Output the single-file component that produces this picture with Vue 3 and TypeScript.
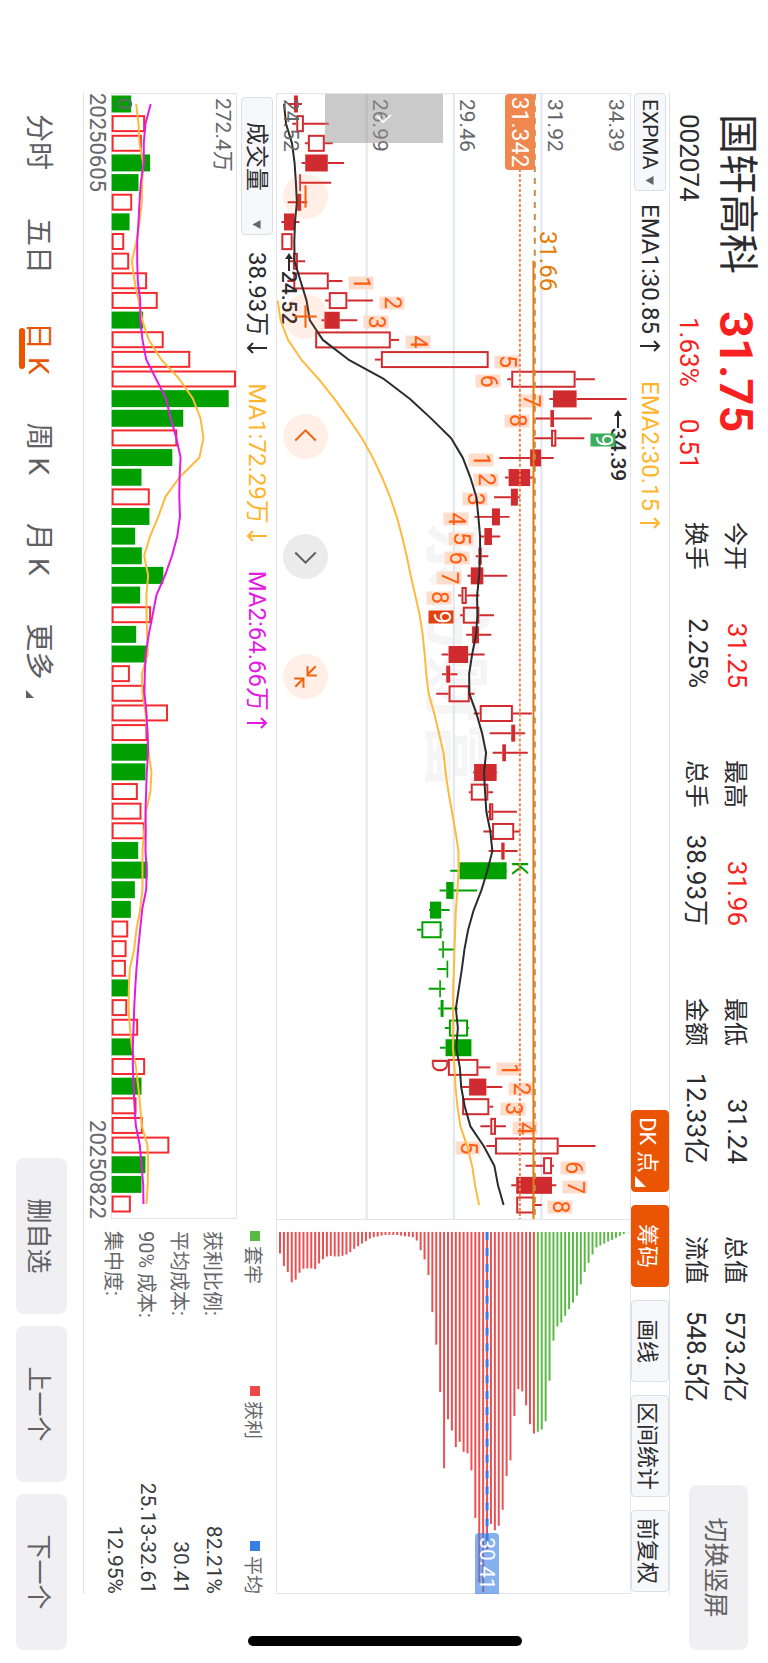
<script setup lang="ts">
import { computed, ref } from 'vue'

type Candle = [low: number, bodyLow: number, bodyHigh: number, high: number, style: string]

// Horizontal geometry shared by the price and the volume charts.
const W = 1126
const H = 354
const VOL_H = 125
const FIRST = 10
const STEP = 1102 / 56
const BODY = 17

const cx = (i: number) => FIRST + i * STEP
// Price levels run from 18 (bottom) to 1081 (top).
const py = (v: number) => ((1081 - v) / 1063) * H
// Volume levels run from 336 (zero) to 711 (maximum).
const vy = (v: number) => ((711 - v) / 375) * VOL_H

// r/g: colour; f: filled, h: hollow
const candles: Candle[] = [
  [50, 68, 80, 92, 'rf'], [63, 75, 98, 173, 'rh'], [101, 110, 161, 185, 'rh'], [91, 102, 170, 219, 'rf'],
  [85, 84, 89, 180, 'rf'], [49, 78, 90, 108, 'rh'], [30, 38, 70, 84, 'rf'], [29, 30, 64, 65, 'rh'],
  [52, 65, 80, 102, 'rh'], [48, 66, 173, 214, 'rh'], [162, 173, 229, 306, 'rh'], [151, 160, 206, 259, 'rf'],
  [132, 132, 360, 385, 'rh'], [312, 330, 655, 655, 'rh'], [711, 723, 917, 975, 'rh'], [838, 849, 920, 1071, 'rf'],
  [797, 841, 852, 966, 'rf'], [793, 843, 859, 943, 'rh'], [687, 780, 813, 851, 'rf'], [704, 715, 780, 788, 'rf'],
  [671, 722, 743, 749, 'rf'], [612, 665, 689, 718, 'rf'], [630, 642, 665, 690, 'rf'], [616, 624, 634, 654, 'rf'],
  [591, 601, 639, 711, 'rf'], [563, 573, 589, 627, 'rh'], [569, 577, 627, 671, 'rh'], [587, 605, 626, 663, 'rf'],
  [513, 534, 593, 643, 'rf'], [514, 527, 539, 561, 'rf'], [497, 534, 598, 612, 'rh'], [610, 628, 728, 785, 'rh'],
  [658, 723, 735, 765, 'rh'], [667, 696, 707, 773, 'rf'], [608, 611, 679, 681, 'rf'], [595, 601, 654, 668, 'rh'],
  [652, 656, 669, 740, 'rh'], [639, 665, 732, 750, 'rh'], [655, 693, 703, 742, 'rf'], [539, 567, 709, 711, 'gf'],
  [507, 527, 549, 620, 'gf'], [475, 478, 512, 537, 'gf'], [439, 452, 513, 517, 'gh'], [504, 515, 520, 550, 'gf'],
  [500, 528, 533, 533, 'gf'], [474, 506, 511, 524, 'gf'], [503, 510, 519, 562, 'gf'], [523, 535, 593, 596, 'gh'],
  [508, 525, 603, 603, 'gf'], [532, 532, 624, 660, 'rh'], [575, 596, 648, 696, 'rf'], [575, 575, 657, 669, 'rh'],
  [630, 660, 677, 707, 'rh'], [648, 674, 866, 977, 'rh'], [766, 819, 846, 852, 'rh'], [723, 738, 846, 859, 'rf'],
  [738, 738, 793, 815, 'rh'],
]

const ema1 = [38, 44, 62, 70, 74, 77, 71, 69, 70, 88, 106, 116, 155, 232, 340, 418, 482, 542, 577, 600, 618, 624, 629, 629, 626, 620, 621, 617, 605, 596, 597, 618, 635, 647, 641, 644, 648, 660, 666, 651, 633, 610, 593, 582, 574, 565, 556, 562, 557, 568, 572, 583, 600, 640, 672, 683, 700]
const ema2 = [19, 28, 50, 90, 143, 190, 233, 273, 306, 334, 358, 378, 394, 408, 420, 434, 447, 456, 462, 467, 474, 491, 505, 519, 525, 534, 544, 555, 564, 564, 561, 556, 554, 552, 550, 548, 547, 548, 547, 552, 555, 561, 570, 590, 605, 614, 626]

const volumes = [395, 437, 427, 452, 417, 398, 390, 374, 389, 443, 475, 431, 493, 573, 711, 689, 552, 534, 519, 426, 451, 450, 407, 427, 492, 422, 455, 410, 442, 391, 434, 506, 444, 445, 438, 415, 426, 436, 416, 444, 406, 394, 386, 381, 379, 387, 383, 416, 399, 437, 426, 411, 430, 510, 438, 426, 394]
const volumeStyle = 'grrggrgrrrrgrrrggrggrggggg' + 'rggrrrrggrrrgggg' + 'rrrgrrgrgrrrggr'
const volMa1 = [410, 417, 420, 431, 428, 427, 420, 411, 397, 405, 417, 428, 448, 485, 540, 581, 604, 613, 601, 541, 498, 477, 452, 434, 446, 441, 441, 443, 445, 427, 429, 438, 445, 447, 456, 453, 440, 434, 429, 429, 429, 422, 411, 404, 391, 388, 387, 391, 397, 409, 416, 422, 427, 444, 446, 445, 441]
const volMa2 = [454, 438, 433, 433, 424, 420, 417, 413, 413, 415, 422, 422, 429, 440, 470, 500, 514, 531, 544, 541, 540, 542, 534, 518, 497, 471, 460, 448, 439, 436, 435, 441, 444, 446, 442, 440, 438, 439, 438, 442, 440, 428, 422, 416, 411, 407, 404, 402, 400, 400, 402, 405, 409, 421, 426, 431, 432]

const line = (values: number[], y: (v: number) => number, start = 0) =>
  values.map((v, i) => `${cx(i + start).toFixed(1)},${y(v).toFixed(1)}`).join(' ')

const ema1Line = computed(() => line(ema1, py))
const ema2Line = computed(() => line(ema2, py, 10))
const volMa1Line = computed(() => line(volMa1, vy))
const volMa2Line = computed(() => line(volMa2, vy))

// Chip distribution, lowest price first.
const chips = [65, 103, 121, 152, 144, 123, 111, 110, 110, 112, 95, 82, 74, 72, 74, 74, 72, 68, 61, 51, 43, 35, 28, 20, 16, 14, 11, 9, 9, 9, 9, 11, 13, 14, 16, 26, 55, 83, 130, 242, 340, 483, 713, 565, 599, 649, 633, 663, 668, 719, 863, 1057, 1087, 957, 881, 900, 886, 838, 736, 689, 555, 474, 481, 523, 580, 608, 603, 596, 571, 449, 328, 285, 273, 253, 233, 213, 192, 158, 121, 93, 68, 47, 41, 35, 29, 24, 18, 12, 6, 1]
const chipY = (i: number) => py(26 + i * (1048 / 89))

const counts: [index: number, level: number, text: string, kind?: string][] = [
  [9, 271, '1'], [10, 363, '2'], [11, 316, '3'], [12, 442, '4'], [13, 709, '5'], [14, 654, '6'], [15, 782, '7'],
  [16, 741, '8'], [17, 1000, '9', 'up'], [18, 631, '1'], [19, 648, '2'], [20, 615, '3'], [21, 555, '4'],
  [22, 573, '5'], [23, 560, '6'], [24, 534, '7'], [25, 506, '8'], [26, 512, '9', 'down'],
  [49, 716, '1'], [50, 752, '2'], [51, 727, '3'], [52, 763, '4'], [53, 593, '5'], [54, 909, '6'], [55, 915, '7'],
  [56, 871, '8'],
]
const signals: [index: number, level: number, text: string, kind: string][] = [
  [39, 747, 'K', 'k'], [49, 505, 'D', 'd'],
]
const place = (x: number, level: number) => ({ left: `${(x / W) * 100}%`, top: `${(py(level) / H) * 100}%` })

const priceTicks = [['34.39', 1039], ['31.92', 855], ['29.46', 590], ['26.99', 326], ['24.52', 60]] as const
const gridLevels = [814, 550, 287]

const quotes = [
  { label: '今开', value: '31.25', rise: true }, { label: '最高', value: '31.96', rise: true },
  { label: '最低', value: '31.24' }, { label: '总值', value: '573.2亿' },
  { label: '换手', value: '2.25%' }, { label: '总手', value: '38.93万' },
  { label: '金额', value: '12.33亿' }, { label: '流值', value: '548.5亿' },
]
const chipStats = [['获利比例:', '82.21%'], ['平均成本:', '30.41'], ['90% 成本:', '25.13-32.61'], ['集中度:', '12.95%']]
const tabs = ['分时', '五日', '日 K', '周 K', '月 K', '更多']
const activeTab = ref('日 K')

const UP = 'M6 21V2M1 7l5-5 5 5'
const DOWN = 'M6 1v19M1 15l5 5 5-5'
</script>

<template>
  <div class="viewport">
    <main class="stage">
      <header class="head">
        <div class="identity">
          <h1 class="name">国轩高科</h1>
          <strong class="price">31.75</strong>
          <span class="code">002074</span>
          <span class="change"><span>1.63%</span><span>0.51</span></span>
        </div>
        <dl class="quotes">
          <div v-for="q in quotes" :key="q.label" class="quote">
            <dt>{{ q.label }}</dt>
            <dd :class="{ rise: q.rise }">{{ q.value }}</dd>
          </div>
        </dl>
        <button class="soft switch" type="button">切换竖屏</button>
      </header>

      <section class="toolbar">
        <div class="picker picker-main">
          <select aria-label="主图指标"><option>EXPMA</option></select>
          <svg viewBox="0 0 10 9" aria-hidden="true"><path d="M0 0h10L5 9z" /></svg>
        </div>
        <span class="reading dark">EMA1:30.85<svg viewBox="0 0 12 22" aria-hidden="true"><path :d="UP" /></svg></span>
        <span class="reading amber">EMA2:30.15<svg viewBox="0 0 12 22" aria-hidden="true"><path :d="UP" /></svg></span>
        <div class="tools">
          <button class="tool on corner" type="button">DK 点<svg viewBox="0 0 12 12" aria-hidden="true"><path d="M12 0v12H0z" /></svg></button>
          <button class="tool on" type="button">筹码</button>
          <button class="tool" type="button">画线</button>
          <button class="tool" type="button">区间统计</button>
          <button class="tool" type="button">前复权</button>
        </div>
      </section>

      <section class="charts">
        <div class="kline">
          <span class="watermark">东方财富</span>
          <svg class="plot" :viewBox="`0 0 ${W} ${H}`" preserveAspectRatio="none" aria-hidden="true">
            <line v-for="g in gridLevels" :key="g" class="grid" x1="0" :x2="W" :y1="py(g)" :y2="py(g)" />
            <g v-for="(c, i) in candles" :key="i" :class="['candle', c[4]]">
              <path :d="`M${cx(i)} ${py(c[3])}V${py(c[2])}M${cx(i)} ${py(c[1])}V${py(c[0])}`" />
              <rect
                v-if="c[4][1] === 'h'" :x="cx(i) - BODY / 2 + 1" :width="BODY - 2"
                :y="py(c[2]) + 1" :height="Math.max(py(c[1]) - py(c[2]) - 2, 1)"
              />
              <rect v-else class="full" :x="cx(i) - BODY / 2" :width="BODY" :y="py(c[2])" :height="py(c[1]) - py(c[2])" />
            </g>
          </svg>
          <span class="note" :style="place(159, 53)">
            <svg viewBox="0 0 18 10" aria-hidden="true"><path d="M4 5h14" /><path class="tip" d="M0 5l6-4v8z" /></svg>24.52
          </span>
          <span class="note" :style="place(316, 1045)">
            <svg viewBox="0 0 18 10" aria-hidden="true"><path d="M4 5h14" /><path class="tip" d="M0 5l6-4v8z" /></svg>34.39
          </span>
          <span
            v-for="(t, i) in counts" :key="i" :class="['count', t[3]]" :style="place(cx(t[0]) + 2, t[1])"
          >{{ t[2] }}</span>
          <span
            v-for="t in signals" :key="t[2]" :class="['count', t[3]]" :style="place(cx(t[0]) - 3, t[1])"
          >{{ t[2] }}</span>
          <svg class="plot" :viewBox="`0 0 ${W} ${H}`" preserveAspectRatio="none" aria-hidden="true">
            <line class="alert" x1="75" :x2="W" :y1="py(749)" :y2="py(749)" />
            <line class="last" x1="167" :x2="W" :y1="py(790)" :y2="py(790)" />
            <line class="last-dash" x1="0" :x2="W" :y1="py(794)" :y2="py(794)" />
            <polyline class="amber-line" :points="ema2Line" />
            <polyline class="dark-line" :points="ema1Line" />
          </svg>
          <span v-for="t in priceTicks" :key="t[0]" class="tick" :style="place(5, t[1])">{{ t[0] }}</span>
          <span class="tag" :style="place(0, 750)">31.342</span>
          <span class="last-price" :style="place(137, 833)">31.66</span>
          <button class="handle" type="button" aria-label="展开">
            <svg viewBox="0 0 10 18"><path d="M1 1l8 9-7 7" /></svg>
          </button>
          <div class="controls">
            <button type="button" aria-label="缩小"><svg viewBox="-22 -22 44 44"><path d="M-11 0H11" /></svg></button>
            <button type="button" aria-label="放大"><svg viewBox="-22 -22 44 44"><path d="M-11 0H11M0 -11V11" /></svg></button>
            <button type="button" aria-label="左移"><svg viewBox="-22 -22 44 44"><path d="M4 -10L-6 0 4 10" /></svg></button>
            <button class="idle" type="button" aria-label="右移"><svg viewBox="-22 -22 44 44"><path d="M-4 -10L6 0 -4 10" /></svg></button>
            <button type="button" aria-label="退出全屏">
              <svg viewBox="-22 -22 44 44"><path d="M-10 -10L-2 -2M-10 -2H-1V-11M10 10L2 2M2 11V2H11" /></svg>
            </button>
          </div>
        </div>
        <div class="chips">
          <svg class="plot" viewBox="0 0 375 354" preserveAspectRatio="none" aria-hidden="true">
            <line
              v-for="(c, i) in chips" :key="i" :class="i > 65 ? 'trapped' : 'profit'"
              x1="12" :x2="12 + c / 3" :y1="chipY(i)" :y2="chipY(i)"
            />
            <line class="mean" x1="12" x2="330" :y1="chipY(53)" :y2="chipY(53)" />
          </svg>
          <span class="mean-tag" :style="{ top: `${(chipY(53) / H) * 100}%` }">30.41</span>
        </div>
      </section>

      <section class="lower">
        <div class="volume-side">
          <div class="volume-head">
            <div class="picker picker-volume">
              <select aria-label="副图指标"><option>成交量</option></select>
              <svg viewBox="0 0 10 9" aria-hidden="true"><path d="M0 0h10L5 9z" /></svg>
            </div>
            <span class="reading dark">38.93万<svg viewBox="0 0 12 22" aria-hidden="true"><path :d="DOWN" /></svg></span>
            <span class="reading amber">MA1:72.29万<svg viewBox="0 0 12 22" aria-hidden="true"><path :d="DOWN" /></svg></span>
            <span class="reading magenta">MA2:64.66万<svg viewBox="0 0 12 22" aria-hidden="true"><path :d="UP" /></svg></span>
          </div>
          <div class="volume">
            <svg class="plot" :viewBox="`0 0 ${W} ${VOL_H}`" preserveAspectRatio="none" aria-hidden="true">
              <template v-for="(v, i) in volumes" :key="i">
                <rect
                  v-if="volumeStyle[i] === 'r'" class="vol-up" :x="cx(i) - BODY / 2 + 1" :width="BODY - 2"
                  :y="vy(v) + 1" :height="VOL_H - vy(v) - 2"
                />
                <rect v-else class="vol-down" :x="cx(i) - BODY / 2" :width="BODY" :y="vy(v)" :height="VOL_H - vy(v)" />
              </template>
              <polyline class="amber-line" :points="volMa1Line" />
              <polyline class="magenta-line" :points="volMa2Line" />
            </svg>
            <span class="vol-max">272.4万</span>
            <span class="vol-zero">0</span>
          </div>
          <div class="dates"><time>20250605</time><time>20250822</time></div>
        </div>
        <aside class="chip-side">
          <div class="legend">
            <span><i class="key-trapped"></i>套牢</span>
            <span><i class="key-profit"></i>获利</span>
            <span><i class="key-mean"></i>平均</span>
          </div>
          <dl class="stats">
            <div v-for="s in chipStats" :key="s[0]"><dt>{{ s[0] }}</dt><dd>{{ s[1] }}</dd></div>
          </dl>
        </aside>
      </section>

      <footer class="foot">
        <nav class="tabs">
          <button
            v-for="t in tabs" :key="t" type="button" :class="{ active: t === activeTab }" @click="activeTab = t"
          >{{ t }}<svg v-if="t === '更多'" viewBox="0 0 8 8" aria-hidden="true"><path d="M8 0v8H0z" /></svg></button>
        </nav>
        <div class="pager">
          <button class="soft" type="button">删自选</button>
          <button class="soft" type="button">上一个</button>
          <button class="soft" type="button">下一个</button>
        </div>
      </footer>
      <div class="home-bar"></div>
    </main>
  </div>
</template>

<style>
body {
  margin: 0;
  background: #fff;
}
</style>

<style scoped>
.viewport {
  width: 100%;
  height: 100vh;
  overflow: hidden;
}
/* Landscape layout turned a quarter clockwise. */
.stage {
  position: relative;
  display: flex;
  flex-direction: column;
  width: 100vh;
  height: 100vw;
  transform-origin: 0 0;
  transform: rotate(90deg) translateY(-100%);
  background: #fff;
  color: #2b2b2e;
  font-family: Roboto, "Noto Sans CJK SC", sans-serif;
  font-size: 22px;
}
.stage * {
  box-sizing: border-box;
}
button, select {
  margin: 0;
  padding: 0;
  border: 0;
  background: none;
  color: inherit;
  font: inherit;
  white-space: nowrap;
}
h1, dl, dd {
  margin: 0;
}
svg {
  display: block;
  fill: none;
  overflow: visible;
}

/* header */
.head {
  display: flex;
  flex: none;
  height: 98px;
  padding: 0 13px 0 114px;
}
.identity {
  display: grid;
  grid-template: 62px 34px / 197px 1fr;
  align-items: center;
  flex: none;
  width: 408px;
  line-height: 1;
}
.name {
  font-size: 40px;
  font-weight: 400;
}
.price {
  color: #fa1f20;
  font-size: 47px;
  font-weight: 700;
}
.code, .change {
  font-size: 26px;
}
.change {
  display: flex;
  gap: 32px;
  padding-left: 6px;
  color: #fa1f20;
}
.quotes {
  display: grid;
  grid-template-columns: repeat(4, 166px);
  grid-auto-rows: 39px;
  column-gap: 72px;
  padding-top: 11px;
}
.quote {
  display: flex;
  align-items: center;
  justify-content: space-between;
}
.quote dt {
  font-size: 24px;
}
.quote dd {
  font-size: 26px;
}
.quote dd.rise {
  color: #fa1f20;
}
.soft {
  border-radius: 8px;
  background: #f0f0f2;
  color: #606064;
  font-size: 25px;
}
.switch {
  width: 165px;
  height: 59px;
  margin: 20px 0 0 auto;
}

/* toolbar */
.toolbar {
  display: flex;
  align-items: center;
  flex: none;
  height: 39px;
  margin: 0 69px 0 93px;
  padding-right: 2px;
  border-top: 1px solid #e3e3e6;
}
.picker {
  position: relative;
  height: 32px;
  border: 1px solid #dcdfe5;
  border-radius: 4px;
  background: #f6f8fb;
}
.picker select {
  width: 100%;
  height: 100%;
  appearance: none;
}
.picker svg {
  position: absolute;
  top: 11px;
  right: 5px;
  width: 9px;
  height: 9px;
  fill: #666;
  pointer-events: none;
}
.picker-main {
  width: 98px;
}
.picker-main select {
  padding-left: 5px;
  font-size: 21px;
}
.reading {
  display: flex;
  align-items: center;
  gap: 6px;
  margin-left: 13px;
  font-size: 24px;
  line-height: 30px;
}
.reading + .reading {
  margin-left: 29px;
}
.reading svg {
  width: 12px;
  height: 22px;
  stroke: currentColor;
  stroke-width: 2;
}
.dark { color: #2b2b2e; }
.amber { color: #ffb52e; }
.magenta { color: #e31ae3; }
.tools {
  display: flex;
  gap: 13px;
  margin-left: auto;
}
.tool {
  position: relative;
  min-width: 82px;
  height: 38px;
  padding: 0 6px;
  border: 1px solid #dcdfe5;
  border-radius: 4px;
  background: #f6f8fb;
  font-size: 22px;
}
.tool.on {
  border-color: #ea5504;
  background: #ea5504;
  color: #fff;
}
.corner {
  padding-right: 18px;
}
.corner svg {
  position: absolute;
  right: 4px;
  bottom: 3px;
  width: 11px;
  height: 11px;
  fill: #fff;
}

/* price chart */
.charts {
  display: grid;
  grid-template-columns: minmax(0, 1126fr) minmax(0, 375fr);
  flex: 354 1 0;
  min-height: 0;
  margin: 0 69px 0 93px;
}
.kline, .chips {
  position: relative;
  border: solid #e3e3e9;
  border-width: 1px 0 1px 1px;
}
.chips {
  border-right-width: 1px;
}
.plot {
  position: absolute;
  inset: 0;
  width: 100%;
  height: 100%;
  pointer-events: none;
}
.grid {
  stroke: #e1e5ee;
  stroke-width: 2;
}
.candle path {
  stroke-width: 2;
}
.candle rect {
  stroke-width: 2;
}
.rf, .rh { stroke: #d02b2e; }
.gf, .gh { stroke: #00a000; }
.candle .full { stroke: none; }
.rf .full { fill: #d02b2e; }
.gf .full { fill: #00a000; }
.dark-line, .amber-line, .magenta-line {
  stroke-width: 2;
  stroke-linejoin: round;
}
.dark-line { stroke: #2b2b2b; }
.amber-line { stroke: #ffb93c; }
.magenta-line { stroke: #e31ae3; }
.alert {
  stroke: #ef854c;
  stroke-width: 2;
  stroke-dasharray: 3 2;
}
.last {
  stroke: #e37c06;
  stroke-width: 2;
}
.last-dash {
  stroke: #c98a45;
  stroke-width: 2;
  stroke-dasharray: 6 6;
}
.watermark {
  position: absolute;
  top: 50%;
  left: 38%;
  transform: translateY(-50%);
  color: #f5f5f6;
  font-size: 67px;
  font-weight: 700;
  line-height: 1;
}
.count {
  position: absolute;
  width: 13px;
  height: 25px;
  transform: translate(-50%, -50%);
  background: #ffddcd;
  color: #ff5d0f;
  font-size: 23px;
  line-height: 26px;
  text-align: center;
}
.count.up {
  background: #3bad5b;
  color: #fff;
}
.count.down {
  background: #e3420f;
  color: #fff;
}
.count.k, .count.d {
  background: none;
  font-size: 22px;
}
.count.k { color: #00a000; }
.count.d { color: #d02b2e; }
.note {
  position: absolute;
  display: flex;
  align-items: center;
  transform: translateY(-50%);
  font-size: 21px;
  font-weight: 500;
}
.note svg {
  width: 18px;
  height: 10px;
  stroke: #2b2b2e;
  stroke-width: 2;
}
.note .tip {
  fill: #2b2b2e;
  stroke: none;
}
.tick {
  position: absolute;
  transform: translateY(-50%);
  color: #66666a;
  font-size: 21px;
}
.tag {
  position: absolute;
  width: 76px;
  height: 30px;
  transform: translateY(-50%);
  border-radius: 4px;
  background: #f0874e;
  color: #fff;
  font-size: 23px;
  line-height: 31px;
  text-align: center;
}
.last-price {
  position: absolute;
  transform: translateY(-50%);
  color: #e37c06;
  font-size: 24px;
}
.handle {
  position: absolute;
  top: 53%;
  left: 0;
  display: grid;
  place-items: center;
  width: 49px;
  height: 118px;
  background: rgba(150, 150, 150, 0.5);
}
.handle svg {
  width: 9px;
  height: 18px;
  stroke: #fff;
  stroke-width: 2;
}
.controls {
  position: absolute;
  bottom: 6px;
  left: 80px;
  display: flex;
  gap: 75px;
}
.controls button {
  width: 45px;
  height: 45px;
  border-radius: 50%;
  background: rgba(255, 98, 20, 0.1);
  color: #f2610c;
}
.controls .idle {
  background: rgba(90, 90, 90, 0.12);
  color: #606064;
}
.controls svg {
  width: 45px;
  height: 45px;
  stroke: currentColor;
  stroke-width: 2;
}

/* chip distribution */
.profit, .trapped {
  stroke-width: 2;
}
.profit { stroke: #ec4f50; }
.trapped { stroke: #5bba45; }
.mean {
  stroke: #2f80ed;
  stroke-width: 3;
  stroke-dasharray: 8 8;
}
.mean-tag {
  position: absolute;
  right: -1px;
  width: 61px;
  height: 24px;
  transform: translateY(-50%);
  border-radius: 4px 0 0 4px;
  background: rgba(60, 130, 228, 0.63);
  color: #fff;
  font-size: 21px;
  line-height: 24px;
  text-align: center;
}

/* volume */
.lower {
  display: grid;
  grid-template-columns: minmax(0, 1126fr) minmax(0, 375fr);
  flex: 192 1 0;
  min-height: 0;
  margin: 0 69px 0 93px;
  border-bottom: 1px solid #e3e3e6;
}
.volume-side {
  display: flex;
  flex-direction: column;
}
.volume-head {
  display: flex;
  align-items: center;
  flex: none;
  height: 39px;
  padding-left: 4px;
}
.picker-volume {
  width: 138px;
}
.picker-volume select {
  padding-left: 24px;
  font-size: 23px;
}
.volume-head .dark {
  margin-left: 17px;
}
.volume {
  position: relative;
  flex: 1;
  border: 1px solid #e3e3e9;
}
.vol-up {
  stroke: #f52a2c;
  stroke-width: 2;
}
.vol-down {
  fill: #00a000;
}
.vol-max, .vol-zero {
  position: absolute;
  left: 4px;
  color: #66666a;
  font-size: 21px;
  line-height: 24px;
}
.vol-max { top: 1px; }
.vol-zero { bottom: 0; }
.dates {
  display: flex;
  justify-content: space-between;
  flex: none;
  height: 27px;
  color: #66666a;
  font-size: 22px;
  line-height: 27px;
}
.chip-side {
  padding-left: 12px;
  color: #66666a;
  font-size: 19px;
}
.legend {
  display: flex;
  align-items: center;
  justify-content: space-between;
  height: 43px;
}
.legend span {
  display: flex;
  align-items: center;
  gap: 5px;
}
.legend i {
  width: 10px;
  height: 10px;
}
.key-trapped { background: #5bba45; }
.key-profit { background: #ec4a4a; }
.key-mean { background: #3580e2; }
.stats {
  padding-top: 3px;
}
.stats div {
  display: flex;
  align-items: center;
  justify-content: space-between;
  height: 33px;
}
.stats dt {
  font-size: 20px;
}
.stats dd {
  color: #3a3a3d;
  font-size: 21px;
}

/* footer */
.foot {
  display: flex;
  align-items: center;
  justify-content: space-between;
  flex: none;
  height: 83px;
  padding: 0 13px 0 114px;
}
.tabs {
  display: flex;
  gap: 48px;
  color: #606064;
  font-size: 28px;
}
.tabs button {
  position: relative;
  height: 48px;
}
.tabs .active {
  color: #ea5504;
}
.tabs .active::after {
  content: "";
  position: absolute;
  bottom: 2px;
  left: 6px;
  right: 6px;
  height: 6px;
  border-radius: 3px;
  background: #ea5504;
}
.tabs svg {
  position: absolute;
  right: -18px;
  bottom: 9px;
  width: 8px;
  height: 8px;
  fill: #606064;
}
.pager {
  display: flex;
  gap: 12px;
}
.pager button {
  width: 156px;
  height: 51px;
}
.home-bar {
  position: absolute;
  top: 32%;
  right: 17px;
  width: 10px;
  height: 274px;
  border-radius: 5px;
  background: #000;
}
</style>
